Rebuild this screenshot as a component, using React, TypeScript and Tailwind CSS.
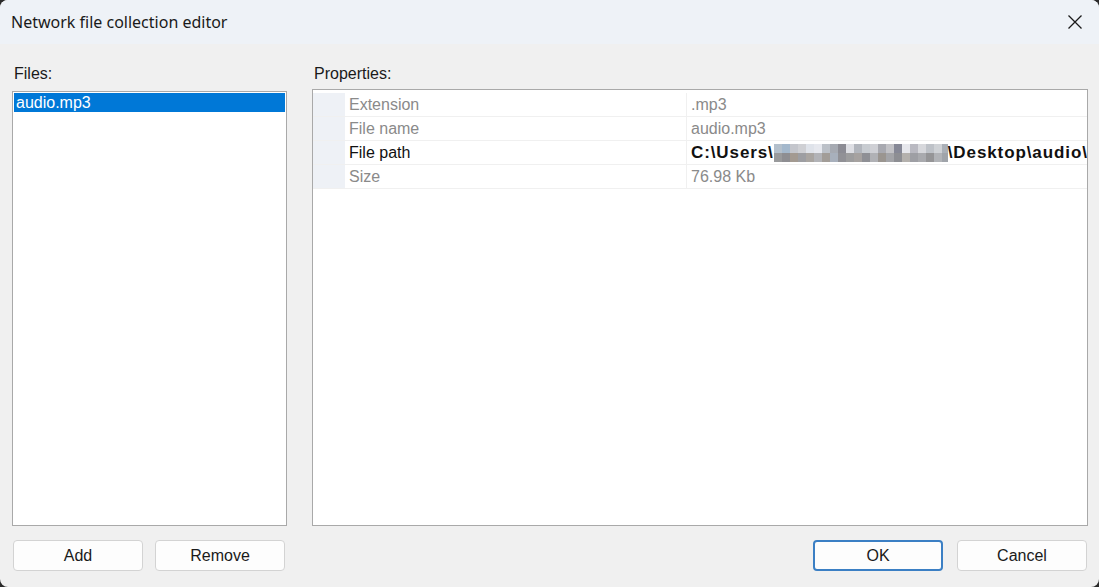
import React from "react";

const top = ["#b4c0cc","#a4b8cc","#c4c6cc","#cfd0d4","#dfe3ea","#e6e8ee","#bcc1c8","#a6aab2","#8c8c94","#dedfe4","#b2b6bd","#c8ccd1","#cfd0d5","#a8a9b0","#c2c2c6","#868896","#e6e7ec","#b9b9c1","#d7d8dc","#bec2c8","#cfd2d6","#aab0b8"];
const bot = ["#999a9c","#8e8e92","#a39a91","#9d9ea2","#a9a5a1","#b2b3b7","#a29d98","#a8b0bc","#919196","#9d9d9e","#a6a2a0","#8f9095","#b0b1b5","#9a9590","#a3a4a8","#8d8e93","#b4b1ad","#9e9fa4","#a9aaae","#959597","#b1b3b7","#a0a4aa"];

function Mosaic() {
  return (
    <span className="inline-flex h-[18px] w-[174px] shrink-0 flex-col overflow-hidden align-middle">
      <span className="flex h-[9px]">
        {top.map((c, i) => (
          <span key={i} className="h-full w-[8px] shrink-0" style={{ background: c }} />
        ))}
      </span>
      <span className="flex h-[9px]">
        {bot.map((c, i) => (
          <span key={i} className="h-full w-[8px] shrink-0" style={{ background: c }} />
        ))}
      </span>
    </span>
  );
}

function Btn({ label, primary }: { label: string; primary?: boolean }) {
  return (
    <div
      className={
        "flex h-[31px] w-[130px] items-center justify-center rounded-[4px] bg-[#fdfdfd] text-[16px] text-[#1a1a1a] " +
        (primary ? "border-2 border-[#3b7fc4]" : "border border-[#d3d3d3]")
      }
    >
      {label}
    </div>
  );
}

const rows = [
  { name: "Extension", value: ".mp3", dim: true },
  { name: "File name", value: "audio.mp3", dim: true },
  { name: "File path", value: "path", dim: false },
  { name: "Size", value: "76.98 Kb", dim: true },
];

export default function App() {
  return (
    <div className="h-[587px] w-[1099px] overflow-hidden bg-[#2b2b2b]" style={{ fontFamily: '"Liberation Sans", Arial, sans-serif' }}>
      <div className="flex h-full w-full flex-col overflow-hidden rounded-[8px] bg-[#f0f0f0]">
        {/* Title bar */}
        <div className="flex h-[44px] shrink-0 items-center justify-between bg-[#eef2f7] pl-[11px] pr-[15px]">
          <span className="text-[16px] text-[#1a1a1a]" style={{ fontFamily: '"Noto Sans", "Open Sans", sans-serif' }}>
            Network file collection editor
          </span>
          <svg width="16" height="16" viewBox="0 0 16 16" className="mr-[1px]">
            <path d="M1.5 1.5 L14.5 14.5 M14.5 1.5 L1.5 14.5" stroke="#1a1a1a" strokeWidth="1.3" />
          </svg>
        </div>
        {/* Body */}
        <div className="flex flex-1 gap-[25px] pl-[12px] pr-[11px] pt-[20px]">
          {/* Files */}
          <div className="flex w-[275px] shrink-0 flex-col">
            <div className="ml-[2px] h-[27px] text-[16px] leading-[19px] text-[#1a1a1a]">Files:</div>
            <div className="h-[435px] border border-[#a9a9a9] bg-white p-[1px]">
              <div className="h-[19px] bg-[#0078d7] pl-[2px] text-[16px] leading-[19px] text-white">audio.mp3</div>
            </div>
            <div className="mt-[14px] flex justify-between pl-[1px] pr-[2px]">
              <Btn label="Add" />
              <Btn label="Remove" />
            </div>
          </div>
          {/* Properties */}
          <div className="flex min-w-0 flex-1 flex-col">
            <div className="ml-[2px] h-[25px] text-[16px] leading-[19px] text-[#1a1a1a]">Properties:</div>
            <div className="h-[437px] border border-[#a9a9a9] bg-white">
              <div className="flex flex-col pt-[3px]">
                {rows.map((r) => (
                  <div key={r.name} className="flex h-[24px] border-b border-[#f0f0f0]">
                    <div className="w-[32px] shrink-0 bg-[#eef1f6]" />
                    <div
                      className={
                        "flex w-[342px] shrink-0 items-center border-r border-[#f0f0f0] pl-[4px] text-[16px] " +
                        (r.dim ? "text-[#8a8a8a]" : "text-[#111]")
                      }
                    >
                      {r.name}
                    </div>
                    <div
                      className={
                        "flex min-w-0 flex-1 items-center overflow-hidden whitespace-nowrap pl-[4px] text-[16px] " +
                        (r.dim ? "text-[#8a8a8a]" : "font-bold text-[#111]")
                      }
                    >
                      {r.value === "path" ? (
                        <span className="flex items-center text-[17px] tracking-[0.9px]">
                          <span className="shrink-0">C:\Users\</span>
                          <Mosaic />
                          <span className="shrink-0">\Desktop\audio\</span>
                        </span>
                      ) : (
                        r.value
                      )}
                    </div>
                  </div>
                ))}
              </div>
            </div>
            <div className="mt-[14px] flex justify-end gap-[14px] pr-[1px]">
              <Btn label="OK" primary />
              <Btn label="Cancel" />
            </div>
          </div>
        </div>
      </div>
    </div>
  );
}
